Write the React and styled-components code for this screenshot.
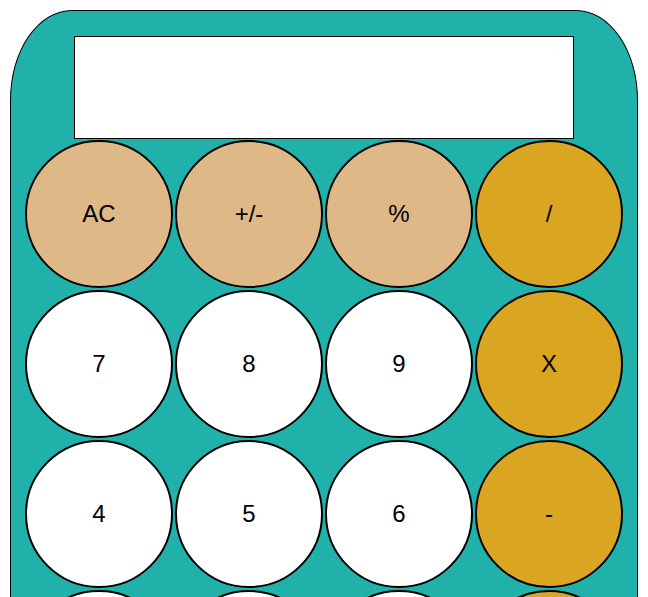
import React from "react";
import styled, { createGlobalStyle } from "styled-components";

const GlobalStyle = createGlobalStyle`
  body {
    margin: 0;
    background: #fff;
    font-family: "Liberation Sans", Arial, sans-serif;
  }
`;

const Body = styled.div`
  margin: 10px;
  width: 628px;
  box-sizing: border-box;
  background: #20b2aa;
  border: 1px solid #000;
  border-radius: 62px / 90px;
  padding: 25px 13px 20px;
`;

const Display = styled.div`
  width: 500px;
  height: 103px;
  box-sizing: border-box;
  margin: 0 auto;
  background: #fff;
  border: 1px solid #000;
  font-size: 40px;
  text-align: right;
`;

const Keys = styled.div`
  display: grid;
  grid-template-columns: repeat(4, 150px);
  grid-auto-rows: 150px;
`;

const colors = {
  func: "#deb887",
  op: "#daa520",
  num: "#fff",
};

const Key = styled.button`
  margin: 1px;
  width: 148px;
  height: 148px;
  box-sizing: border-box;
  border-radius: 50%;
  border: 2px solid #000;
  background: ${({ kind }) => colors[kind]};
  font-family: "Liberation Sans", Arial, sans-serif;
  font-size: 24px;
  color: #000;
  padding: 0;
  cursor: pointer;
`;

const keys = [
  ["AC", "func"],
  ["+/-", "func"],
  ["%", "func"],
  ["/", "op"],
  ["7", "num"],
  ["8", "num"],
  ["9", "num"],
  ["X", "op"],
  ["4", "num"],
  ["5", "num"],
  ["6", "num"],
  ["-", "op"],
  ["1", "num"],
  ["2", "num"],
  ["3", "num"],
  ["+", "op"],
  ["0", "num"],
  [".", "num"],
  ["DEL", "func"],
  ["=", "op"],
];

const App = () => (
  <>
    <GlobalStyle />
    <Body>
      <Display />
      <Keys>
        {keys.map(([label, kind]) => (
          <Key key={label} kind={kind}>
            {label}
          </Key>
        ))}
      </Keys>
    </Body>
  </>
);

export default App;
